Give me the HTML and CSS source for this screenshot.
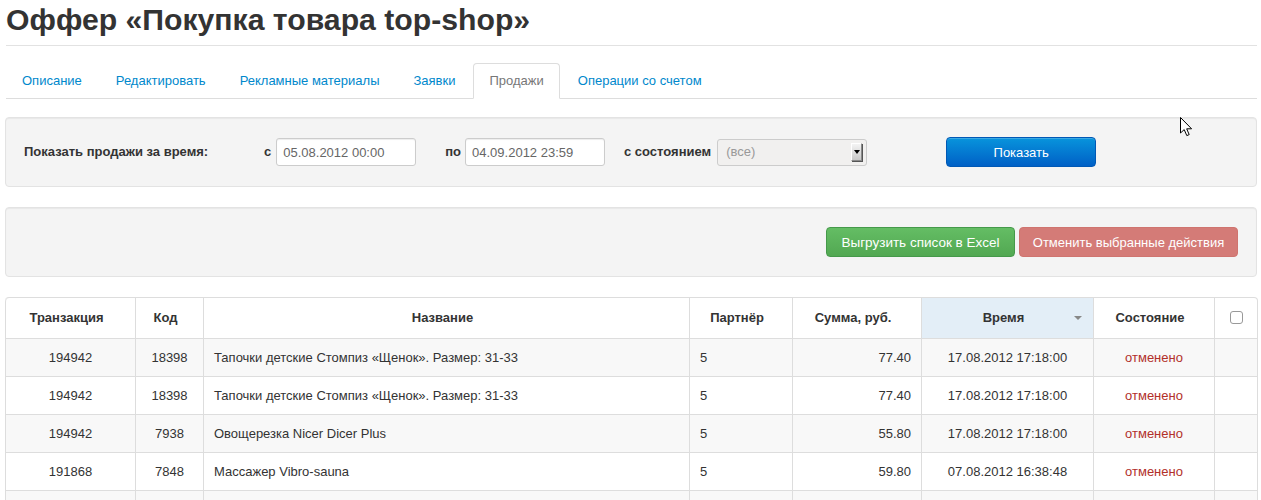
FILE: index.html
```html
<!DOCTYPE html>
<html lang="ru">
<head>
<meta charset="utf-8">
<title>Оффер «Покупка товара top-shop»</title>
<link rel="stylesheet" href="styles.css">
</head>
<body>
<div class="page">
  <div class="page-header">
    <h1>Оффер «Покупка товара top-shop»</h1>
  </div>

  <ul class="tabs">
    <li><a href="#">Описание</a></li>
    <li><a href="#">Редактировать</a></li>
    <li><a href="#">Рекламные материалы</a></li>
    <li><a href="#">Заявки</a></li>
    <li class="active"><a href="#">Продажи</a></li>
    <li><a href="#">Операции со счетом</a></li>
  </ul>

  <form class="well filter">
    <span class="filter-title">Показать продажи за время:</span>
    <label class="lbl">с</label>
    <input class="field" type="text" value="05.08.2012 00:00">
    <label class="lbl lbl-to">по</label>
    <input class="field" type="text" value="04.09.2012 23:59">
    <label class="lbl lbl-state">с состоянием</label>
    <div class="select">
      <span class="select-text">(все)</span>
      <span class="select-btn"><span class="select-arrow"></span></span>
    </div>
    <button class="btn btn-primary" type="button">Показать</button>
  </form>

  <div class="well actions">
    <button class="btn btn-success" type="button">Выгрузить список в Excel</button>
    <button class="btn btn-danger" type="button">Отменить выбранные действия</button>
  </div>

  <table class="grid">
    <colgroup>
      <col class="c-tr"><col class="c-code"><col class="c-name"><col class="c-partner"><col class="c-sum"><col class="c-time"><col class="c-state"><col class="c-check">
    </colgroup>
    <thead>
      <tr>
        <th>Транзакция</th>
        <th>Код</th>
        <th>Название</th>
        <th>Партнёр</th>
        <th>Сумма, руб.</th>
        <th class="sorted"><span>Время</span><span class="caret"></span></th>
        <th>Состояние</th>
        <th class="th-check"><span class="checkbox"></span></th>
      </tr>
    </thead>
    <tbody>
      <tr>
        <td class="center">194942</td><td class="center">18398</td>
        <td>Тапочки детские Стомпиз «Щенок». Размер: 31-33</td>
        <td>5</td><td class="right">77.40</td>
        <td class="center">17.08.2012 17:18:00</td>
        <td class="center status">отменено</td><td></td>
      </tr>
      <tr>
        <td class="center">194942</td><td class="center">18398</td>
        <td>Тапочки детские Стомпиз «Щенок». Размер: 31-33</td>
        <td>5</td><td class="right">77.40</td>
        <td class="center">17.08.2012 17:18:00</td>
        <td class="center status">отменено</td><td></td>
      </tr>
      <tr>
        <td class="center">194942</td><td class="center">7938</td>
        <td>Овощерезка Nicer Dicer Plus</td>
        <td>5</td><td class="right">55.80</td>
        <td class="center">17.08.2012 17:18:00</td>
        <td class="center status">отменено</td><td></td>
      </tr>
      <tr>
        <td class="center">191868</td><td class="center">7848</td>
        <td>Массажер Vibro-sauna</td>
        <td>5</td><td class="right">59.80</td>
        <td class="center">07.08.2012 16:38:48</td>
        <td class="center status">отменено</td><td></td>
      </tr>
      <tr>
        <td></td><td></td><td></td><td></td><td></td><td></td><td></td><td></td>
      </tr>
    </tbody>
  </table>

  <svg class="cursor" width="13" height="20" viewBox="0 0 13 20" aria-hidden="true">
    <path d="M0.5 0.5 L0.5 16 L4.2 12.6 L6.8 18.6 L9.2 17.6 L6.7 11.8 L11.6 11.8 Z" fill="#fff" stroke="#000" stroke-width="1" stroke-linejoin="round"/>
  </svg>
</div>
</body>
</html>
```

FILE: styles.css
```css
* { box-sizing: border-box; }

body {
  margin: 0;
  font-family: "Liberation Sans", Arial, sans-serif;
  font-size: 13px;
  line-height: 20px;
  color: #333;
  background: #fff;
}

.page {
  position: relative;
  padding: 0 4px 0 5px;
}

.page-header {
  margin-left: 1px;
  padding-bottom: 5px;
  border-bottom: 1px solid #e2e2e2;
}

.page-header h1 {
  margin: 0;
  font-size: 30.2px;
  line-height: 40px;
  font-weight: bold;
  color: #333;
}

.tabs {
  display: flex;
  list-style: none;
  margin: 17px 0 0 1px;
  padding: 0;
  border-bottom: 1px solid #ddd;
}

.tabs li {
  margin-bottom: -1px;
  margin-right: 2px;
}

.tabs a {
  display: block;
  padding: 7px 15px;
  line-height: 20px;
  border: 1px solid transparent;
  border-radius: 4px 4px 0 0;
  color: #0088cc;
  text-decoration: none;
}

.tabs .active a {
  color: #777;
  background: #fff;
  border-color: #ddd #ddd transparent;
}

.well {
  display: flex;
  align-items: center;
  height: 70px;
  background: #f4f4f4;
  border: 1px solid #e3e3e3;
  border-radius: 4px;
  box-shadow: inset 0 1px 1px rgba(0, 0, 0, 0.05);
}

.filter {
  margin: 18px 0 0;
  padding: 0 0 0 18px;
}

.filter-title {
  font-weight: bold;
  width: 240px;
}

.lbl {
  font-weight: bold;
  margin-right: 5px;
}

.lbl-to { margin-left: 29px; margin-right: 4px; }
.lbl-state { margin-left: 19px; margin-right: 6px; }

.field {
  width: 140px;
  height: 28px;
  padding: 0 6px;
  font: 13px "Liberation Sans", Arial, sans-serif;
  color: #666;
  background: #fff;
  border: 1px solid #ccc;
  border-radius: 3px;
  box-shadow: inset 0 1px 1px rgba(0, 0, 0, 0.075);
}

.select {
  display: flex;
  align-items: center;
  justify-content: space-between;
  width: 150px;
  height: 27px;
  padding: 0 4px 0 8px;
  background: #f1f0ef;
  border: 1px solid #ccc;
  border-radius: 3px;
}

.select-text { color: #999; }

.select-btn {
  position: relative;
  width: 11px;
  height: 18px;
  background: linear-gradient(#f4f4f4, #c8c8c8);
  border: 1px solid #8a8a8a;
  border-top-color: #fff;
  border-left-color: #fff;
  box-shadow: 1px 1px 0 #555;
}

.select-arrow {
  position: absolute;
  left: 2px;
  top: 6px;
  border-left: 3px solid transparent;
  border-right: 3px solid transparent;
  border-top: 4px solid #000;
}

.btn {
  height: 30px;
  padding: 0 8px;
  font: 13px "Liberation Sans", Arial, sans-serif;
  white-space: nowrap;
  color: #fff;
  border-radius: 4px;
  border: 1px solid transparent;
  cursor: pointer;
}

.btn-primary {
  width: 150px;
  margin-left: 79px;
  background: linear-gradient(#0894dc, #0060c6);
  border-color: #0058b5;
  box-shadow: inset 0 1px 0 rgba(255, 255, 255, 0.2);
}

.actions {
  margin-top: 20px;
  justify-content: flex-end;
  gap: 4px;
  padding-right: 18px;
}

.btn-success {
  width: 189px;
  font-size: 13.5px;
  background: linear-gradient(#64bd64, #52a852);
  border-color: #45994a;
}

.btn-danger {
  width: 219px;
  background: #d47b77;
  border-color: #cf746f;
}

.grid {
  width: 100%;
  margin-top: 20px;
  border-collapse: separate;
  border-spacing: 0;
  border: 1px solid #ddd;
  border-left: 0;
  border-radius: 4px;
  table-layout: fixed;
}

.c-tr { width: 130px; }
.c-code { width: 68px; }
.c-name { width: 486px; }
.c-partner { width: 103px; }
.c-sum { width: 129px; }
.c-time { width: 172px; }
.c-state { width: 121px; }
.c-check { width: 43px; }

.grid th,
.grid td {
  border-left: 1px solid #ddd;
  padding: 0 10px;
  vertical-align: middle;
}

.grid th {
  height: 40px;
  padding: 0 18px 0 10px;
  font-weight: bold;
  text-align: center;
}

.grid th.th-check { padding: 0 10px; }

.grid td {
  height: 38px;
  border-top: 1px solid #ddd;
  text-align: left;
}

.grid tbody tr:nth-child(odd) td { background: #f8f8f8; }

.grid thead th:first-child { border-top-left-radius: 4px; }

.grid .center { text-align: center; }
.grid .right { text-align: right; }
.grid .status { color: #b2302a; }

.grid th.sorted {
  position: relative;
  background: #e3eef7;
}

.caret {
  position: absolute;
  right: 11px;
  top: 18px;
  border-left: 4px solid transparent;
  border-right: 4px solid transparent;
  border-top: 4px solid #888;
}

.checkbox {
  display: inline-block;
  width: 13px;
  height: 13px;
  margin-top: 4px;
  border: 1px solid #999;
  border-radius: 3px;
  background: #fff;
}

.cursor {
  position: absolute;
  left: 1180px;
  top: 117px;
}
```
